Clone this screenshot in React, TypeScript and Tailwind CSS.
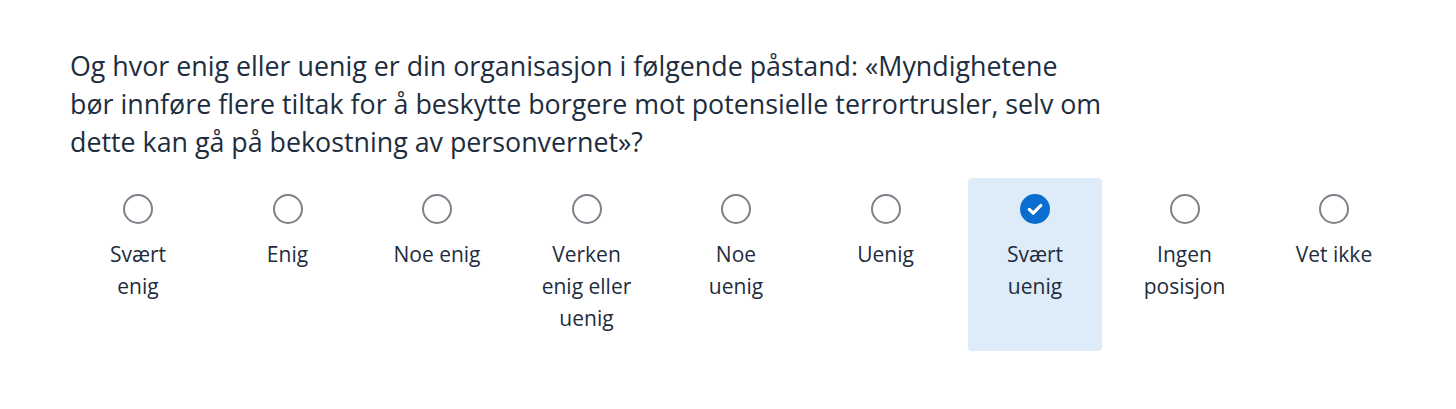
import React from "react";

const options: { lines: string[]; selected?: boolean }[] = [
  { lines: ["Svært", "enig"] },
  { lines: ["Enig"] },
  { lines: ["Noe enig"] },
  { lines: ["Verken", "enig eller", "uenig"] },
  { lines: ["Noe", "uenig"] },
  { lines: ["Uenig"] },
  { lines: ["Svært", "uenig"], selected: true },
  { lines: ["Ingen", "posisjon"] },
  { lines: ["Vet ikke"] },
];

export default function App() {
  return (
    <div
      className="w-[1456px] h-[409px] bg-white text-[#1d2d3e] pt-[47px] pl-[70px]"
      style={{ fontFamily: "'Open Sans', 'Noto Sans', sans-serif" }}
    >
      <p className="text-[26.8px] leading-[38px]">
        Og hvor enig eller uenig er din organisasjon i følgende påstand: «Myndighetene
        <br />
        bør innføre flere tiltak for å beskytte borgere mot potensielle terrortrusler, selv om
        <br />
        dette kan gå på bekostning av personvernet»?
      </p>
      <div className="mt-[17px] ml-[1px] flex gap-[15.5px]">
        {options.map((o, i) => (
          <div
            key={i}
            className={
              "w-[134px] h-[173px] rounded-[4px] flex flex-col items-center pt-[16px] " +
              (o.selected ? "bg-[#deebf8]" : "")
            }
          >
            {o.selected ? (
              <svg width="30" height="30" viewBox="0 0 30 30">
                <circle cx="15" cy="15" r="15" fill="#0a6ed1" />
                <path
                  d="M9.3 15.4 L13.2 19.2 L20.8 11.5"
                  fill="none"
                  stroke="white"
                  strokeWidth="3.2"
                  strokeLinecap="round"
                  strokeLinejoin="round"
                />
              </svg>
            ) : (
              <div className="w-[30px] h-[30px] rounded-full border-[2.5px] border-[#7c8288]" />
            )}
            <div className="mt-[14px] text-[21px] leading-[32px] text-center whitespace-nowrap">
              {o.lines.map((l, j) => (
                <div key={j}>{l}</div>
              ))}
            </div>
          </div>
        ))}
      </div>
    </div>
  );
}
